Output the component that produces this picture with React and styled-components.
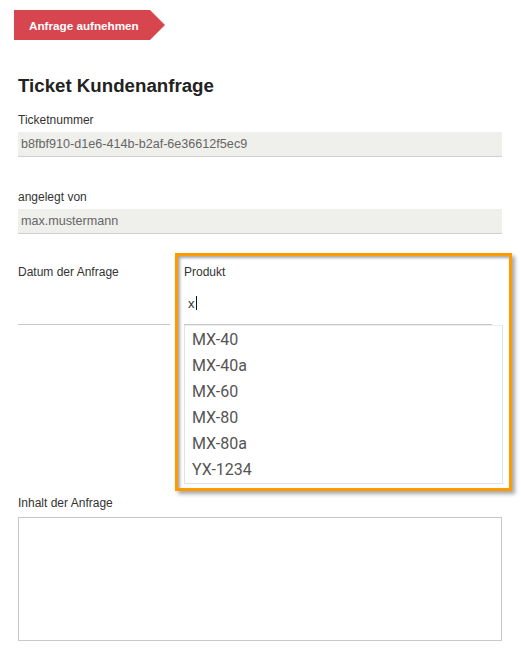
import React from "react";
import styled, { createGlobalStyle } from "styled-components";

const Global = createGlobalStyle`
  html, body { margin: 0; padding: 0; background: #fff; }
  body { font-family: "Liberation Sans", Arial, sans-serif; color: #333; }
`;

const Page = styled.div`
  padding: 10px 19px 20px 18px;
  width: 521px;
  box-sizing: border-box;
`;

const ActionButton = styled.button`
  display: flex;
  align-items: center;
  margin-left: -4px;
  width: 151px;
  height: 30px;
  padding: 0 0 0 15px;
  border: none;
  background: #d7464f;
  color: #fff;
  font-family: "Liberation Sans", Arial, sans-serif;
  font-weight: bold;
  font-size: 11.7px;
  clip-path: polygon(0 0, 136px 0, 151px 50%, 136px 100%, 0 100%);
  cursor: pointer;
`;

const Title = styled.h2`
  margin: 35px 0 0 0;
  font-size: 18.7px;
  line-height: 22px;
  font-weight: bold;
  color: #222;
`;

const Field = styled.div`
  display: flex;
  flex-direction: column;
  margin-top: ${(p) => p.$mt}px;
`;

const Label = styled.label`
  font-size: 12px;
  line-height: 16px;
  color: #333;
`;

const ReadOnly = styled.div`
  margin-top: 4px;
  height: 24px;
  line-height: 24px;
  padding-left: 3px;
  background: #efefeb;
  border-bottom: 1px solid #cfcfcf;
  font-size: 12.6px;
  color: #666;
`;

const Row = styled.div`
  position: relative;
  display: grid;
  grid-template-columns: 152px 1fr;
  column-gap: 14px;
  margin-top: 30px;
`;

const Column = styled.div`
  display: flex;
  flex-direction: column;
`;

const LineInput = styled.div`
  display: flex;
  align-items: center;
  margin-top: 2px;
  margin-right: ${(p) => p.$mr || 0}px;
  height: 42px;
  padding-left: 4px;
  border-bottom: 1px solid #c8c8c8;
  font-size: 13px;
  color: #333;
`;

const Caret = styled.span`
  display: inline-block;
  width: 1px;
  height: 14px;
  margin-left: 1px;
  background: #111;
`;

const List = styled.ul`
  list-style: none;
  margin: 0 -1px 0 0;
  padding: 1px 0 0 0;
  border: 1px solid #e2e2e2;
  border-top-color: #ededed;
  background: #fff;
`;

const Item = styled.li`
  height: 26px;
  line-height: 26px;
  padding-left: 7px;
  font-family: Roboto, "Liberation Sans", Arial, sans-serif;
  font-size: 16px;
  color: #555;
`;

const Highlight = styled.div`
  position: absolute;
  left: 157px;
  top: -11px;
  width: 337px;
  height: 238px;
  box-sizing: border-box;
  border: 3px solid #ff9a00;
  box-shadow: 3px 3px 4px rgba(0, 0, 0, 0.35),
    inset 2px 2px 3px rgba(0, 0, 0, 0.35);
  pointer-events: none;
`;

const TextArea = styled.div`
  margin-top: 6px;
  height: 122px;
  border: 1px solid #c8c8c8;
  background: #fff;
`;

const products = ["MX-40", "MX-40a", "MX-60", "MX-80", "MX-80a", "YX-1234"];

export default function App() {
  return (
    <>
      <Global />
      <Page>
        <ActionButton>Anfrage aufnehmen</ActionButton>
        <Title>Ticket Kundenanfrage</Title>
        <Field $mt={15}>
          <Label>Ticketnummer</Label>
          <ReadOnly>b8fbf910-d1e6-414b-b2af-6e36612f5ec9</ReadOnly>
        </Field>
        <Field $mt={32}>
          <Label>angelegt von</Label>
          <ReadOnly>max.mustermann</ReadOnly>
        </Field>
        <Row>
          <Column>
            <Label>Datum der Anfrage</Label>
            <LineInput />
          </Column>
          <Column>
            <Label>Produkt</Label>
            <LineInput $mr={10}>
              x<Caret />
            </LineInput>
            <List>
              {products.map((p) => (
                <Item key={p}>{p}</Item>
              ))}
            </List>
          </Column>
          <Highlight />
        </Row>
        <Field $mt={11}>
          <Label>Inhalt der Anfrage</Label>
          <TextArea />
        </Field>
      </Page>
    </>
  );
}
